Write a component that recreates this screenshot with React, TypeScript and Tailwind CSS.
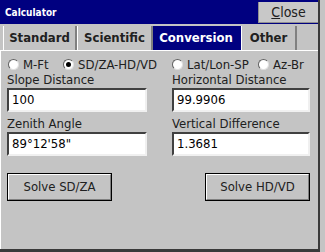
const font = { fontFamily: '"DejaVu Sans Condensed", "DejaVu Sans", sans-serif' };

function Radio({ label, checked, w }: { label: string; checked?: boolean; w: string }) {
  return (
    <div className={`${w} shrink-0 flex items-center gap-[4px] whitespace-nowrap`}>
      <span className="shrink-0 w-[11px] h-[11px] rounded-full bg-white border border-t-[#606060] border-l-[#606060] border-b-[#e0e0e0] border-r-[#e0e0e0] flex items-center justify-center">
        {checked && <span className="w-[5px] h-[5px] rounded-full bg-black" />}
      </span>
      <span className="text-[13px] leading-[15px] text-[#202020]">{label}</span>
    </div>
  );
}

function Field({ label, value, w }: { label: string; value: string; w: string }) {
  return (
    <div className={`flex flex-col ${w}`}>
      <span className="text-[13px] leading-[16px] text-[#202020] whitespace-nowrap">{label}</span>
      <div className="h-[24px] bg-white border-2 border-t-[#404040] border-l-[#404040] border-b-[#f0f0f0] border-r-[#f0f0f0] flex items-center px-[3px]">
        <span className="text-[13px] text-black">{value}</span>
      </div>
    </div>
  );
}

function Button({ label }: { label: string }) {
  return (
    <button className="w-[105px] h-[28px] bg-[#c4c4c4] border border-black flex items-center justify-center">
      <span className="w-full h-full border-t border-l border-white border-b border-r border-b-[#808080] border-r-[#808080] flex items-center justify-center text-[13px] text-[#202020]">
        {label}
      </span>
    </button>
  );
}

export default function App() {
  const tabs = [
    { name: 'Standard', w: 'w-[74px]' },
    { name: 'Scientific', w: 'w-[76px]' },
    { name: 'Conversion', w: 'w-[88px]' },
    { name: 'Other', w: 'w-[56px]' },
  ];
  return (
    <div className="w-[325px] h-[252px] bg-[#c4c4c4] overflow-hidden" style={font}>
      <div className="w-[320px] h-[252px] border-r-2 border-b-[3px] border-[#3a3a3a] flex flex-col">
        {/* title bar */}
        <div className="h-[24px] bg-[#000080] flex items-center justify-between pl-[5px]">
          <span className="text-[10px] font-bold text-white">Calculator</span>
          <div className="w-[60px] h-[21px] mt-[1px] bg-[#c8c8c8] border-l border-b border-[#909090] flex items-center justify-center">
            <span className="text-[14px] text-[#202020]">
              <span className="underline">C</span>lose
            </span>
          </div>
        </div>

        {/* tabs */}
        <div className="h-[24px] mt-[2px] flex pl-[3px]">
          {tabs.map((t) => (
            <div
              key={t.name}
              className={`${t.w} h-full flex items-center justify-center text-[13px] font-bold border-r-2 border-[#808080] ${
                t.name === 'Conversion' ? 'bg-[#000080] text-white border-r-[#000080]' : 'text-[#202020] border-l border-l-white'
              }`}
            >
              {t.name}
            </div>
          ))}
        </div>

        {/* panel */}
        <div className="flex-1 border-l border-t border-white flex flex-col pl-[6px] pr-[8px] pt-[6px]">
          <div className="flex items-center h-[15px] pl-[1px]">
            <Radio label="M-Ft" w="w-[55px]" />
            <Radio label="SD/ZA-HD/VD" checked w="w-[109px]" />
            <Radio label="Lat/Lon-SP" w="w-[86px]" />
            <Radio label="Az-Br" w="w-[50px]" />
          </div>
          <div className="flex justify-between">
            <Field label="Slope Distance" value="100" w="w-[140px]" />
            <Field label="Horizontal Distance" value="99.9906" w="w-[138px]" />
          </div>
          <div className="flex justify-between mt-[4px]">
            <Field label="Zenith Angle" value={'89°12\'58"'} w="w-[140px]" />
            <Field label="Vertical Difference" value="1.3681" w="w-[138px]" />
          </div>
          <div className="flex justify-between mt-[17px]">
            <Button label="Solve SD/ZA" />
            <Button label="Solve HD/VD" />
          </div>
        </div>
      </div>
    </div>
  );
}
